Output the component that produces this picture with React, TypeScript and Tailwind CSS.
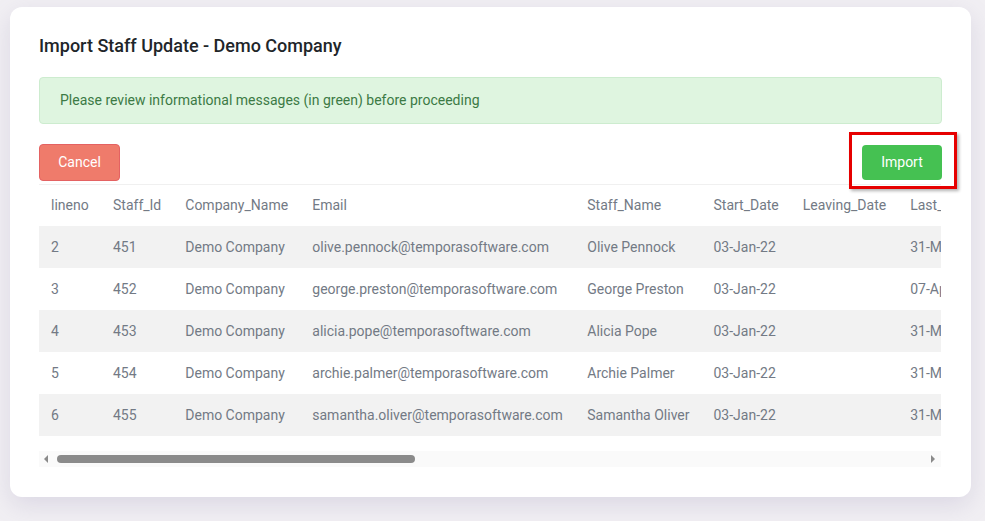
import React from "react";

const columns: { key: string; label: string; w: number }[] = [
  { key: "lineno", label: "lineno", w: 62 },
  { key: "staffId", label: "Staff_Id", w: 72 },
  { key: "company", label: "Company_Name", w: 127 },
  { key: "email", label: "Email", w: 275 },
  { key: "name", label: "Staff_Name", w: 126 },
  { key: "start", label: "Start_Date", w: 89 },
  { key: "leaving", label: "Leaving_Date", w: 107 },
  { key: "last", label: "Last_Working_Date", w: 150 },
];

type Row = Record<string, string>;

const rows: Row[] = [
  { lineno: "2", staffId: "451", company: "Demo Company", email: "olive.pennock@temporasoftware.com", name: "Olive Pennock", start: "03-Jan-22", leaving: "", last: "31-Mar-22" },
  { lineno: "3", staffId: "452", company: "Demo Company", email: "george.preston@temporasoftware.com", name: "George Preston", start: "03-Jan-22", leaving: "", last: "07-Apr-22" },
  { lineno: "4", staffId: "453", company: "Demo Company", email: "alicia.pope@temporasoftware.com", name: "Alicia Pope", start: "03-Jan-22", leaving: "", last: "31-Mar-22" },
  { lineno: "5", staffId: "454", company: "Demo Company", email: "archie.palmer@temporasoftware.com", name: "Archie Palmer", start: "03-Jan-22", leaving: "", last: "31-Mar-22" },
  { lineno: "6", staffId: "455", company: "Demo Company", email: "samantha.oliver@temporasoftware.com", name: "Samantha Oliver", start: "03-Jan-22", leaving: "", last: "31-Mar-22" },
];

export default function App() {
  return (
    <div
      className="w-[985px] h-[521px] bg-[#f1eff3] overflow-hidden pt-[7px] pl-[10px]"
      style={{ fontFamily: "Roboto, 'Noto Sans', sans-serif" }}
    >
      <div className="w-[961px] h-[490px] bg-white rounded-[12px] shadow-[0_8px_24px_rgba(120,110,160,0.18)] px-[29px] pt-[27px]">
        <h1 className="text-[18px] leading-[23px] font-medium text-[#212529]">
          Import Staff Update - Demo Company
        </h1>

        <div className="mt-[20px] h-[47px] flex items-center rounded-[4px] bg-[#dff5e0] border border-[#cdeccf] px-[20px] text-[14px] text-[#3c7a45]">
          Please review informational messages (in green) before proceeding
        </div>

        <div className="mt-[20px] flex items-start justify-between">
          <button className="h-[37px] w-[81px] rounded-[4px] bg-[#ef7b6b] border border-[#e46262] text-white text-[14px]">
            Cancel
          </button>
          <div className="relative mt-px">
            <button className="h-[35px] w-[80px] rounded-[4px] bg-[#45c152] text-white text-[14px]">
              Import
            </button>
            <div className="absolute -left-[13px] -right-[15px] -top-[13px] -bottom-[9px] border-[3px] border-[#e60000] shadow-[2px_2px_3px_rgba(0,0,0,0.3)] pointer-events-none" />
          </div>
        </div>

        <div className="mt-[3px] w-[902px] overflow-hidden border-t border-[#f0f0f0]">
          <table className="border-collapse text-[14px] text-[#737a85] whitespace-nowrap">
            <thead>
              <tr className="h-[41px]">
                {columns.map((c) => (
                  <th
                    key={c.key}
                    className="text-left font-normal px-[12px]"
                    style={{ minWidth: c.w, width: c.w }}
                  >
                    {c.label}
                  </th>
                ))}
              </tr>
            </thead>
            <tbody>
              {rows.map((r, i) => (
                <tr key={r.lineno} className={i % 2 === 0 ? "h-[42px] bg-[#f2f2f2]" : "h-[42px] bg-white"}>
                  {columns.map((c) => (
                    <td key={c.key} className="px-[12px]">
                      {r[c.key]}
                    </td>
                  ))}
                </tr>
              ))}
            </tbody>
          </table>
        </div>

        <div className="mt-[15px] w-[902px] h-[16px] bg-[#fafafa] flex items-center relative">
          <svg className="absolute left-[4px] top-[4px]" width="6" height="8" viewBox="0 0 6 8">
            <path d="M5 0 L1 4 L5 8 Z" fill="#8a8a8a" />
          </svg>
          <div className="absolute left-[18px] top-[4px] w-[358px] h-[8px] rounded-full bg-[#8b8b8b]" />
          <svg className="absolute left-[891px] top-[4px]" width="6" height="8" viewBox="0 0 6 8">
            <path d="M1 0 L5 4 L1 8 Z" fill="#8a8a8a" />
          </svg>
        </div>
      </div>
    </div>
  );
}
